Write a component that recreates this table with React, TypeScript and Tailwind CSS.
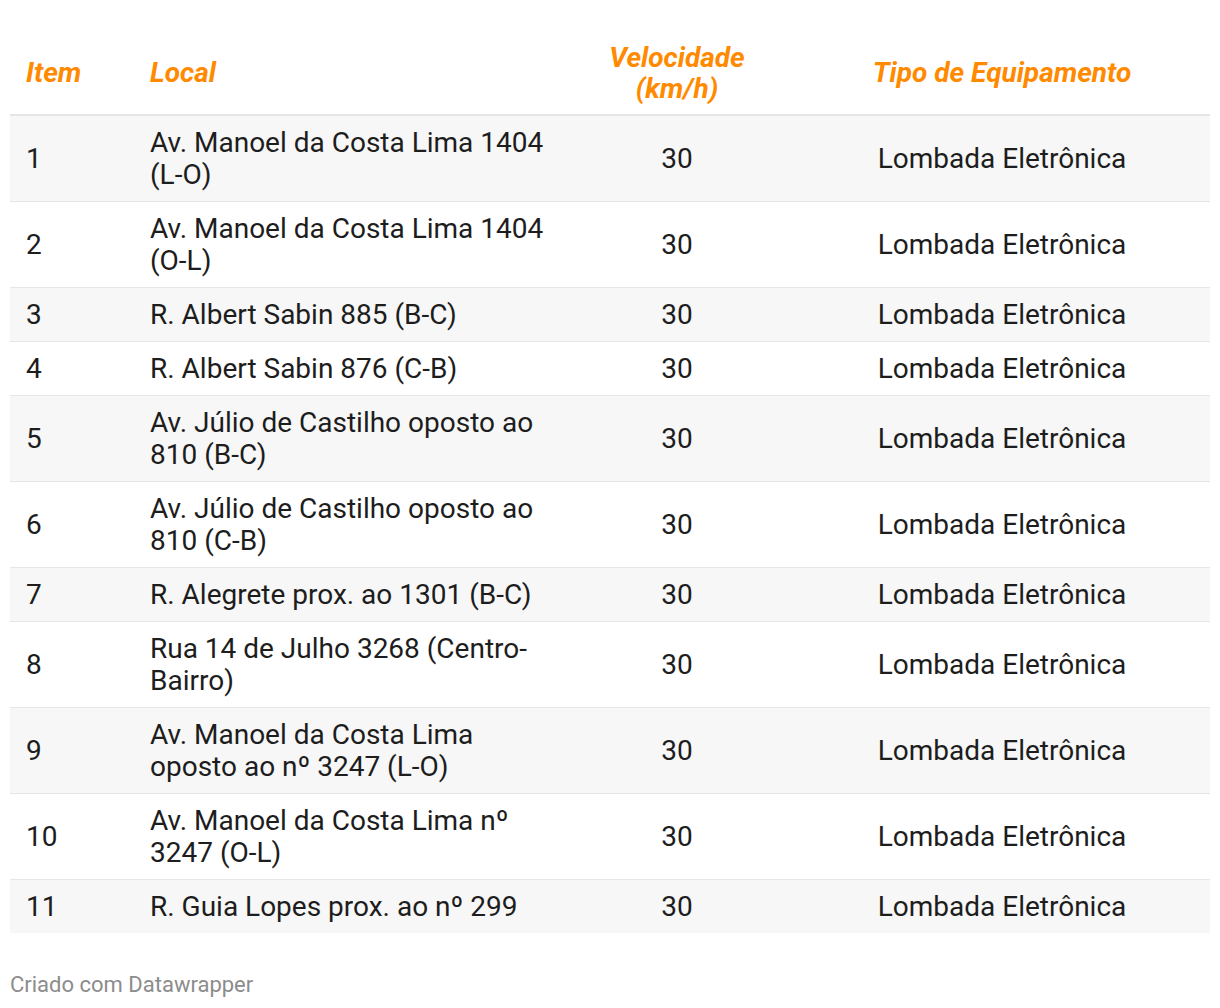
import React from "react";

const rows: { item: string; local: string[] }[] = [
  { item: "1", local: ["Av. Manoel da Costa Lima 1404", "(L-O)"] },
  { item: "2", local: ["Av. Manoel da Costa Lima 1404", "(O-L)"] },
  { item: "3", local: ["R. Albert Sabin 885 (B-C)"] },
  { item: "4", local: ["R. Albert Sabin 876 (C-B)"] },
  { item: "5", local: ["Av. Júlio de Castilho oposto ao", "810 (B-C)"] },
  { item: "6", local: ["Av. Júlio de Castilho oposto ao", "810 (C-B)"] },
  { item: "7", local: ["R. Alegrete prox. ao 1301 (B-C)"] },
  { item: "8", local: ["Rua 14 de Julho 3268 (Centro-", "Bairro)"] },
  { item: "9", local: ["Av. Manoel da Costa Lima", "oposto ao nº 3247 (L-O)"] },
  { item: "10", local: ["Av. Manoel da Costa Lima nº", "3247 (O-L)"] },
  { item: "11", local: ["R. Guia Lopes prox. ao nº 299"] },
];

export default function App() {
  return (
    <div
      className="bg-white w-[1220px] h-[1008px] px-[10px] pt-[32px]"
      style={{ fontFamily: "Roboto, 'Noto Sans', sans-serif" }}
    >
      <div className="w-[1200px]">
        <div className="flex h-[84px] items-start pt-[10px] border-b-2 border-[#e6e6e6] text-[#ff8a00] font-bold italic text-[28px] leading-[31px]">
          <div className="w-[124px] pl-4 pt-[15px]">Item</div>
          <div className="w-[426px] pl-4 pt-[15px]">Local</div>
          <div className="w-[234px] text-center">
            Velocidade
            <br />
            (km/h)
          </div>
          <div className="w-[416px] text-center pt-[15px]">Tipo de Equipamento</div>
        </div>
        {rows.map((r, i) => (
          <div
            key={r.item}
            className={`flex items-center text-[28px] leading-[32px] text-[#1d1d1d] pt-[11px] pb-[10px] ${
              i % 2 === 0 ? "bg-[#f7f7f7]" : "bg-white"
            } ${i < rows.length - 1 ? "border-b border-[#e6e6e6]" : ""}`}
          >
            <div className="w-[124px] pl-4">{r.item}</div>
            <div className="w-[426px] px-4 whitespace-nowrap">
              {r.local.map((l, j) => (
                <div key={j}>{l}</div>
              ))}
            </div>
            <div className="w-[234px] text-center">30</div>
            <div className="w-[416px] text-center">Lombada Eletrônica</div>
          </div>
        ))}
        <div className="mt-[39px] text-[22px] leading-[26px] text-[#8c8c8c]">
          Criado com Datawrapper
        </div>
      </div>
    </div>
  );
}
